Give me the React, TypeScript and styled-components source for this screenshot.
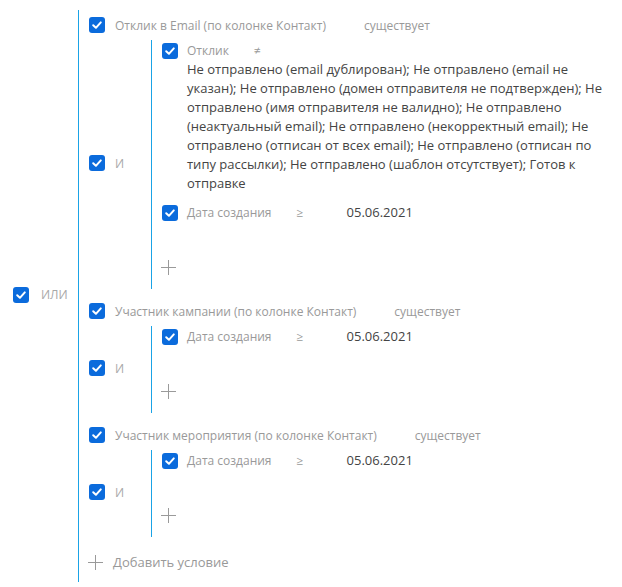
import styled, { createGlobalStyle } from 'styled-components';

const GlobalStyle = createGlobalStyle`
  body {
    margin: 0;
    background: #ffffff;
    font-family: 'Open Sans', 'Noto Sans', sans-serif;
    font-size: 13px;
    color: #444444;
  }
`;

const Page = styled.div`
  padding: 10px 0 5px 13px;
`;

const Group = styled.div`
  display: flex;
  align-items: center;
`;

const Operator = styled.div<{ $width: number; $gap: number }>`
  display: flex;
  align-items: center;
  gap: ${(p) => p.$gap}px;
  width: ${(p) => p.$width}px;
  flex-shrink: 0;
  margin-top: -3px;
`;

const OperatorLabel = styled.span`
  color: #a8a8a8;
  font-size: 12px;
  line-height: 19px;
`;

const Body = styled.div<{ $nested?: boolean }>`
  flex: 1;
  min-width: 0;
  border-left: 1px solid #1aa3e6;
  padding: ${(p) => (p.$nested ? '1px 10px 6px 10px' : '0 0 2px 10px')};
`;

const Item = styled.div`
  margin-bottom: 7px;
`;

const TitleRow = styled.div`
  display: flex;
  align-items: center;
  gap: 10px;
  height: 30px;
`;

const Muted = styled.span<{ $offset?: number }>`
  color: #999999;
  font-size: 12px;
  margin-left: ${(p) => p.$offset ?? 0}px;
  white-space: nowrap;
`;

const RowList = styled.div`
  display: flex;
  flex-direction: column;
  gap: 10px;
`;

const ConditionRow = styled.div`
  display: flex;
  align-items: flex-start;
  gap: 9px;
`;

const CheckWrap = styled.span<{ $top?: number }>`
  display: inline-flex;
  flex-shrink: 0;
  margin-top: ${(p) => p.$top ?? 0}px;
`;

const RowContent = styled.div`
  flex: 1;
  min-width: 0;
  display: flex;
  flex-wrap: wrap;
  align-items: baseline;
  line-height: 19px;
  padding-right: 8px;
`;

const FieldLabel = styled.span`
  color: #999999;
  font-size: 12px;
  margin-right: 25px;
`;

const Compare = styled.span`
  color: #999999;
  font-size: 12px;
  width: 50px;
`;

const Value = styled.span`
  color: #444444;
`;

const PlusRow = styled.div`
  display: flex;
  align-items: center;
  height: 32px;
  margin-top: 29px;
  margin-left: -1px;
`;

const AddRow = styled.div`
  display: flex;
  align-items: center;
  gap: 10px;
  height: 36px;
  margin-left: -1px;
`;

const AddText = styled.span`
  color: #999999;
`;

const Checkbox = () => (
  <svg width="16" height="16" viewBox="0 0 16 16">
    <rect x="0" y="0" width="16" height="16" rx="3" fill="#0b6bdc" />
    <path d="M4.2 8.3 L6.9 10.8 L11.8 5.4" fill="none" stroke="#ffffff" strokeWidth="2" strokeLinecap="round" strokeLinejoin="round" />
  </svg>
);

const Plus = () => (
  <svg width="15" height="15" viewBox="0 0 15 15">
    <path d="M7.5 0 V15 M0 7.5 H15" stroke="#9a9a9a" strokeWidth="1" />
  </svg>
);

type Cond = { label: string; op: string; value: string };

const longValue =
  'Не отправлено (email дублирован); Не отправлено (email не указан); Не отправлено (домен отправителя не подтвержден); Не отправлено (имя отправителя не валидно); Не отправлено (неактуальный email); Не отправлено (некорректный email); Не отправлено (отписан от всех email); Не отправлено (отписан по типу рассылки); Не отправлено (шаблон отсутствует); Готов к отправке';

const sections: { title: string; conditions: Cond[] }[] = [
  {
    title: 'Отклик в Email (по колонке Контакт)',
    conditions: [
      { label: 'Отклик', op: '≠', value: longValue },
      { label: 'Дата создания', op: '≥', value: '05.06.2021' },
    ],
  },
  {
    title: 'Участник кампании (по колонке Контакт)',
    conditions: [{ label: 'Дата создания', op: '≥', value: '05.06.2021' }],
  },
  {
    title: 'Участник мероприятия (по колонке Контакт)',
    conditions: [{ label: 'Дата создания', op: '≥', value: '05.06.2021' }],
  },
];

const App = () => {
  return (
    <>
      <GlobalStyle />
      <Page>
        <Group>
          <Operator $width={65} $gap={12}>
            <Checkbox />
            <OperatorLabel>ИЛИ</OperatorLabel>
          </Operator>
          <Body>
            {sections.map((s) => (
              <Item key={s.title}>
                <TitleRow>
                  <Checkbox />
                  <Muted>{s.title}</Muted>
                  <Muted $offset={28}>существует</Muted>
                </TitleRow>
                <Group>
                  <Operator $width={62} $gap={10}>
                    <Checkbox />
                    <OperatorLabel>И</OperatorLabel>
                  </Operator>
                  <Body $nested>
                    <RowList>
                      {s.conditions.map((c) => (
                        <ConditionRow key={c.label}>
                          <CheckWrap $top={2}>
                            <Checkbox />
                          </CheckWrap>
                          <RowContent>
                            <FieldLabel>{c.label}</FieldLabel>
                            <Compare>{c.op}</Compare>
                            <Value>{c.value}</Value>
                          </RowContent>
                        </ConditionRow>
                      ))}
                    </RowList>
                    <PlusRow>
                      <Plus />
                    </PlusRow>
                  </Body>
                </Group>
              </Item>
            ))}
            <AddRow>
              <Plus />
              <AddText>Добавить условие</AddText>
            </AddRow>
          </Body>
        </Group>
      </Page>
    </>
  );
};

export default App;
